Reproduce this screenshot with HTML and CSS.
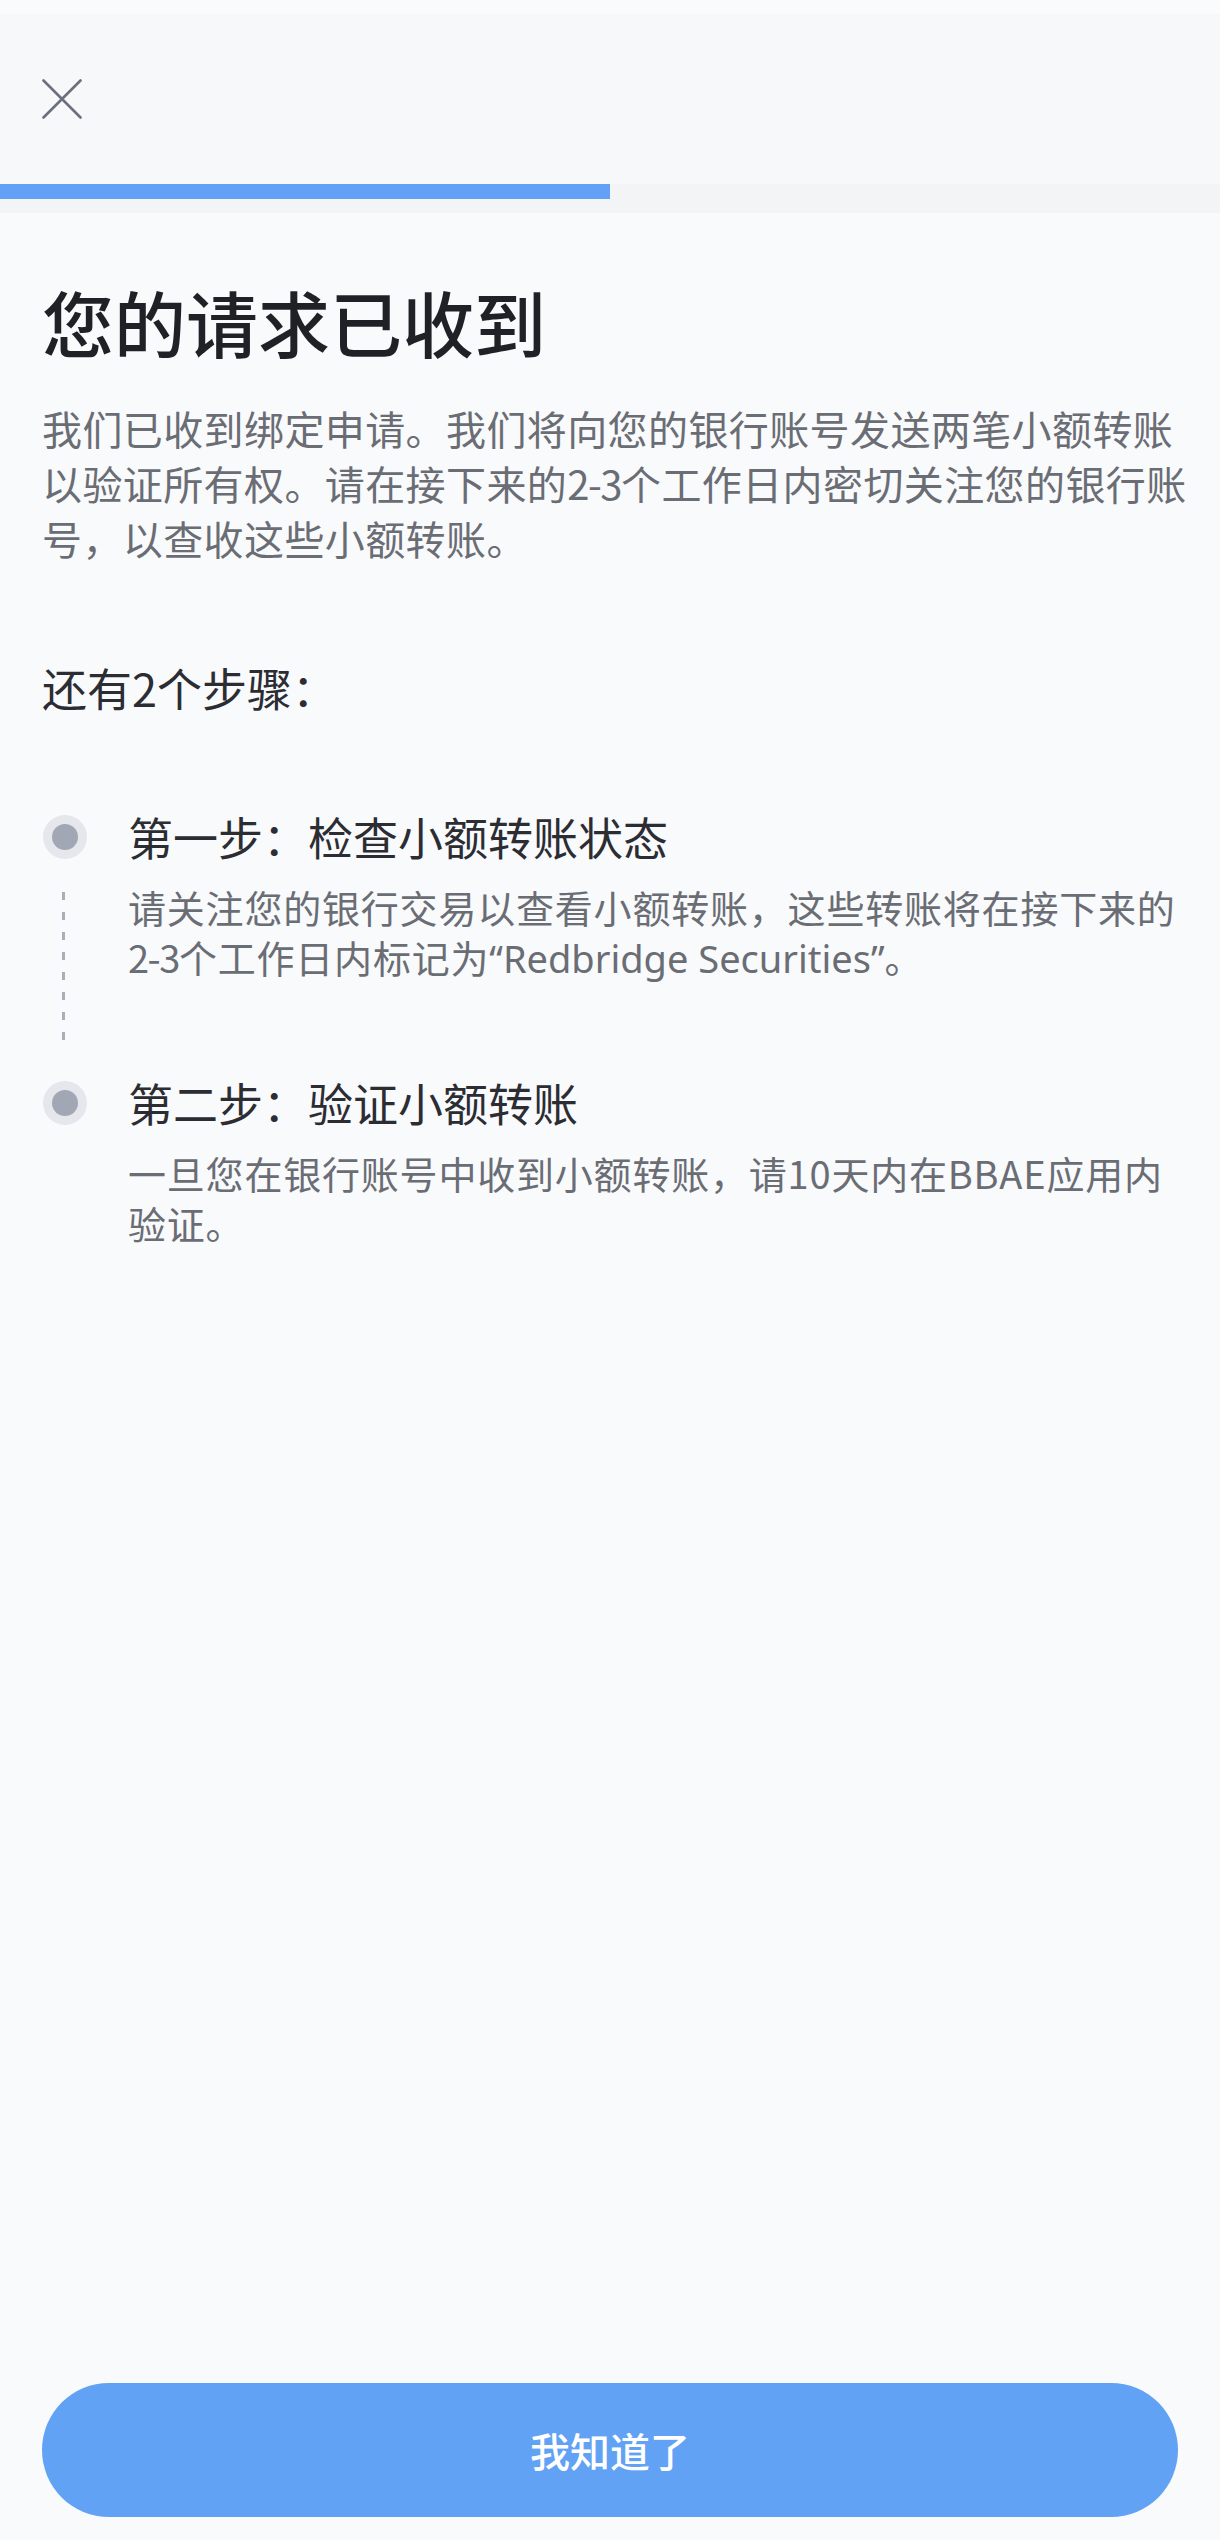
FILE: index.html
```html
<!DOCTYPE html>
<html lang="zh-CN">
<head>
<meta charset="utf-8">
<title>您的请求已收到</title>
<link rel="stylesheet" href="styles.css">
</head>
<body>
<div class="page">
  <header class="topbar">
    <button class="close" aria-label="关闭">
      <svg width="40" height="40" viewBox="0 0 40 40"><path d="M1.5 1.5 L38.5 38.5 M38.5 1.5 L1.5 38.5" stroke="#6c6f7e" stroke-width="2.6" stroke-linecap="round" fill="none"/></svg>
    </button>
  </header>
  <div class="progress"><div class="progress-fill" style="width:50%"></div></div>

  <main class="content">
    <h1 class="title">您的请求已收到</h1>
    <p class="lead">我们已收到绑定申请。我们将向您的银行账号发送两笔小额转账<br>以验证所有权。请在接下来的<span class="num">2-3</span>个工作日内密切关注您的银行账<br>号，以查收这些小额转账。</p>

    <h2 class="steps-heading">还有2个步骤：</h2>

    <ol class="steps">
      <li class="step step-first">
        <div class="rail"><span class="dot"></span><span class="dash"></span></div>
        <div class="step-body">
          <div class="step-title">第一步：检查小额转账状态</div>
          <div class="step-desc">请关注您的银行交易以查看小额转账，这些转账将在接下来的<br><span class="num">2-3</span>个工作日内标记为<span class="latin">“Redbridge Securities”</span>。</div>
        </div>
      </li>
      <li class="step">
        <div class="rail"><span class="dot"></span></div>
        <div class="step-body">
          <div class="step-title">第二步：验证小额转账</div>
          <div class="step-desc">一旦您在银行账号中收到小额转账，请10天内在BBAE应用内<br>验证。</div>
        </div>
      </li>
    </ol>
  </main>

  <footer class="footer">
    <button class="primary">我知道了</button>
  </footer>
</div>
</body>
</html>
```
FILE: styles.css
```css
* { box-sizing: border-box; }
html, body { margin: 0; padding: 0; }
body {
  background: #f9fafc;
  font-family: "Noto Sans CJK SC", "Noto Sans", sans-serif;
  color: #2b2d33;
}
.page {
  min-height: 2540px;
  display: flex;
  flex-direction: column;
}
.topbar {
  height: 184px;
  padding: 14px 0 0 42px;
  display: flex;
  align-items: center;
  background: linear-gradient(#fafbfc 0, #fafbfc 14px, #f7f8f9 14px);
}
.close {
  width: 40px;
  height: 40px;
  padding: 0;
  border: 0;
  background: transparent;
  display: flex;
}
.progress {
  height: 29px;
  background: #f3f4f6;
}
.progress-fill {
  height: 15px;
  background: #62a1f5;
}
.content {
  padding: 63px 42px 0;
}
.title {
  margin: 0;
  font-size: 72px;
  line-height: 90px;
  font-weight: 500;
  color: #1f2126;
}
.lead {
  margin: 35px 0 0;
  font-size: 40px;
  line-height: 55px;
  letter-spacing: 0.4px;
  color: #6a6d74;
  white-space: nowrap;
}
.num {
  letter-spacing: -1.5px;
}
.latin {
  font-family: "Noto Sans", sans-serif;
  letter-spacing: 0;
}
.steps-heading {
  margin: 92px 0 0;
  font-size: 45px;
  line-height: 60px;
  font-weight: 400;
  color: #2b2d33;
}
.steps {
  list-style: none;
  margin: 89px 0 0;
  padding: 0;
}
.step {
  display: flex;
  gap: 40px;
}
.rail {
  width: 46px;
  flex: none;
  display: flex;
  flex-direction: column;
  align-items: center;
}
.dot {
  width: 44px;
  height: 44px;
  margin-top: 8px;
  border-radius: 50%;
  background: #e5e7ec;
  display: flex;
  align-items: center;
  justify-content: center;
}
.dot::after {
  content: "";
  width: 26px;
  height: 26px;
  border-radius: 50%;
  background: #a1a7b4;
}
.dash {
  flex: 1;
  width: 3px;
  margin: 33px 3px 32px 0;
  background: repeating-linear-gradient(#a9aeb9 0, #a9aeb9 8px, transparent 8px, transparent 20px);
}
.step-body {
  flex: 1;
}
.step-first .step-body {
  padding-bottom: 90px;
}
.step-title {
  font-size: 45px;
  line-height: 60px;
  color: #2b2d33;
}
.step-desc {
  margin-top: 15px;
  font-size: 38px;
  line-height: 50px;
  letter-spacing: 0.8px;
  color: #6a6d74;
  white-space: nowrap;
}
.footer {
  margin-top: auto;
  padding: 0 42px 23px;
}
.primary {
  display: block;
  width: 100%;
  height: 134px;
  border: 0;
  border-radius: 67px;
  background: #62a2f5;
  color: #ffffff;
  font-family: "Noto Sans CJK SC", "Noto Sans", sans-serif;
  font-size: 40px;
  font-weight: 500;
}
```
